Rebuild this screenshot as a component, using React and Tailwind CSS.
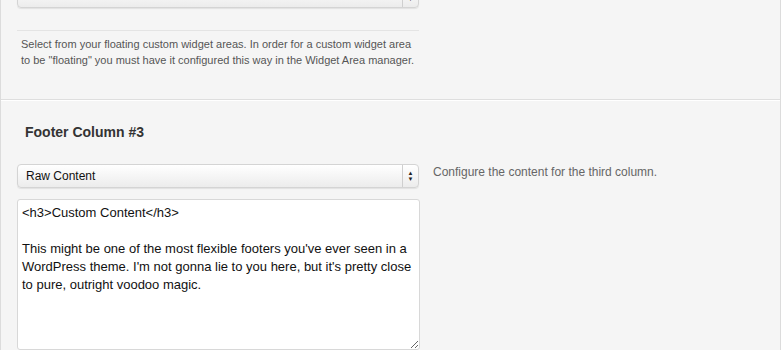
import React from 'react';

const content = `<h3>Custom Content</h3>

This might be one of the most flexible footers you've ever seen in a WordPress theme. I'm not gonna lie to you here, but it's pretty close to pure, outright voodoo magic.`;

const SelectBox = ({ label, className = '' }) => (
    <div
        className={`flex h-[24px] w-[402px] items-stretch rounded-[4px] border border-[#d4d4d4] bg-gradient-to-b from-white to-[#ececec] shadow-[0_1px_1px_rgba(0,0,0,0.08)] ${className}`}
    >
        <span className="flex-1 pl-[8px] text-[12px] leading-[22px] text-[#111]">{label}</span>
        <span className="flex w-[16px] flex-col items-center justify-center border-l border-[#cfcfcf] text-[6px] leading-[6px] text-[#222]">
            <span>▲</span>
            <span>▼</span>
        </span>
    </div>
);

export default function App() {
    return (
        <div
            className="h-[350px] w-[781px] overflow-hidden border-x border-[#dcdcdc] bg-[#f5f5f5]"
            style={{ fontFamily: '"Liberation Sans", Arial, sans-serif' }}
        >
            <div className="px-[16px]">
                <SelectBox label="" className="-mt-[16px]" />
                <div className="mt-[22px] w-[402px] border-t border-[#e4e4e4] pl-[4px] pt-[5px] text-[11px] leading-[16px] text-[#555]">
                    <p>Select from your floating custom widget areas. In order for a custom widget area</p>
                    <p>to be "floating" you must have it configured this way in the Widget Area manager.</p>
                </div>
            </div>
            <div className="mt-[31px] border-t border-[#dedede] shadow-[inset_0_1px_0_#fff]">
                <div className="px-[16px] pt-[24px]">
                    <h3 className="pl-[8px] text-[14px] font-bold leading-[17px] text-[#333]">Footer Column #3</h3>
                    <div className="mt-[23px] flex items-start gap-[14px]">
                        <SelectBox label="Raw Content" />
                        <p className="pt-[1px] text-[12px] leading-[14px] text-[#666]">Configure the content for the third column.</p>
                    </div>
                    <textarea
                        readOnly
                        defaultValue={content}
                        className="mt-[11px] block h-[151px] w-[403px] rounded-[3px] border border-[#d8d8d8] bg-white px-[4px] py-[4px] text-[13px] leading-[18px] text-[#111] outline-none"
                        style={{ fontFamily: '"Liberation Sans", Arial, sans-serif' }}
                    />
                </div>
            </div>
        </div>
    );
}
